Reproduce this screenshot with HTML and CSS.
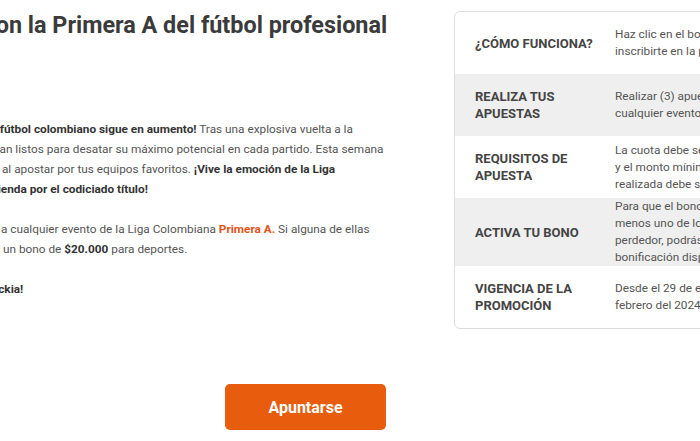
FILE: index.html
```html
<!DOCTYPE html>
<html lang="es">
<head>
    <meta charset="UTF-8">
    <meta name="viewport" content="width=device-width, initial-scale=1.0">
    <title>Primera A - Promoción</title>
    <link rel="stylesheet" href="styles.css">
</head>
<body>
    <div class="promo">
        <div class="promo-grid">
            <div class="intro">
                <h1>Juega con la Primera A del fútbol profesional</h1>
                <p><b>¡La emoción del fútbol colombiano sigue en aumento!</b> Tras una explosiva vuelta a la<br>cancha, clubes van listos para desatar su máximo potencial en cada partido. Esta semana<br>premiamos tu fe al apostar por tus equipos favoritos. <b>¡Vive la emoción de la Liga<br>en la ardua contienda por el codiciado título!</b></p>
                <p>Crea 3 apuestas a cualquier evento de la Liga Colombiana <b class="highlight">Primera A.</b> Si alguna de ellas<br>pierde, te damos un bono de <b>$20.000</b> para deportes.</p>
                <p><b>¡Apuesta con Luckia!</b></p>
            </div>

            <div class="how">
                <div class="how-row">
                    <div class="how-label">¿Cómo funciona?</div>
                    <div class="how-text">Haz clic en el botón Apuntarse para<br>inscribirte en la promoción.</div>
                </div>
                <div class="how-row">
                    <div class="how-label">Realiza tus apuestas</div>
                    <div class="how-text">Realizar (3) apuestas prepartido a<br>cualquier evento de la Primera A.</div>
                </div>
                <div class="how-row">
                    <div class="how-label">Requisitos de apuesta</div>
                    <div class="how-text">La cuota debe ser mínima de 1.50<br>y el monto mínimo de cada apuesta<br>realizada debe ser de $5.000.</div>
                </div>
                <div class="how-row">
                    <div class="how-label">Activa tu bono</div>
                    <div class="how-text">Para que el bono se active, al<br>menos uno de los tickets debe ser<br>perdedor, podrás reclamar la<br>bonificación disponible.</div>
                </div>
                <div class="how-row">
                    <div class="how-label">Vigencia de la promoción</div>
                    <div class="how-text">Desde el 29 de enero hasta el 4 de<br>febrero del 2024.</div>
                </div>
            </div>
        </div>

        <div class="actions">
            <button class="btn-join">Apuntarse</button>
        </div>
    </div>
</body>
</html>
```

FILE: styles.css
```css
* {
    margin: 0;
    padding: 0;
    box-sizing: border-box;
}

body {
    font-family: Roboto, 'Liberation Sans', Arial, sans-serif;
    background: #fff;
    color: #555;
    overflow: hidden;
}

.promo {
    width: 785px;
    margin-left: -87px;
    padding-top: 11px;
}

.promo-grid {
    display: grid;
    grid-template-columns: 520px 400px;
    column-gap: 21px;
    align-items: start;
}

.intro h1 {
    font-size: 23.4px;
    line-height: 28px;
    font-weight: 700;
    color: #3b3b3b;
    white-space: nowrap;
    margin-bottom: 80px;
}

.intro p {
    font-size: 11.8px;
    line-height: 20px;
    margin-bottom: 20px;
}

.intro b {
    color: #333;
}

.intro .highlight {
    color: #e5531a;
}

.how {
    border: 1px solid #ddd;
    border-radius: 6px;
    overflow: hidden;
}

.how-row {
    display: grid;
    grid-template-columns: 160px 1fr;
    align-items: center;
    min-height: 62px;
}

.how-row:nth-child(even) {
    background: #efefef;
}

.how-label {
    padding: 0 10px 0 20px;
    font-size: 13px;
    line-height: 17px;
    font-weight: 700;
    text-transform: uppercase;
    color: #444;
}

.how-text {
    font-size: 11.8px;
    line-height: 17px;
    color: #555;
    padding-right: 20px;
}

.actions {
    display: flex;
    justify-content: center;
    margin-top: 55px;
}

.btn-join {
    width: 161px;
    height: 46px;
    border: none;
    border-radius: 5px;
    background: #e85c0d;
    color: #fff;
    font-family: Roboto, 'Liberation Sans', Arial, sans-serif;
    font-size: 16px;
    font-weight: 700;
    cursor: pointer;
}
```
